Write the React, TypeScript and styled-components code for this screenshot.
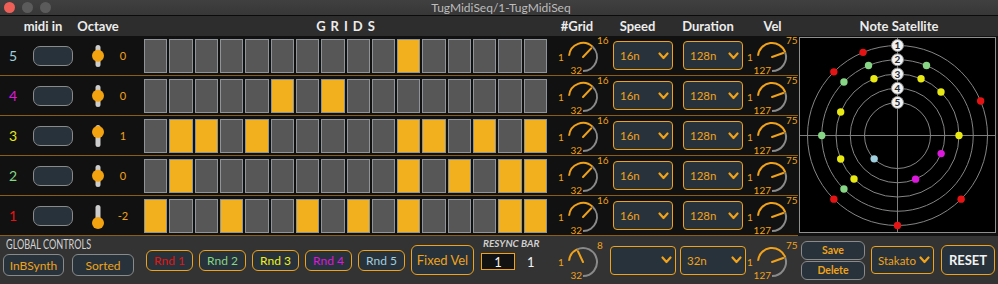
import React from 'react';
import styled, {createGlobalStyle} from 'styled-components';

const ORANGE = '#f0a21a';
const CELL_ON = '#f2b01f';
const SLATE = '#27323a';
const GREY_LINE = '#8a8a8a';

type Track = {n: number; color: string; oct: number; cells: number[]};

const tracks: Track[] = [
  {n: 5, color: '#9fcfdf', oct: 0, cells: [10]},
  {n: 4, color: '#dd18dd', oct: 0, cells: [5, 7]},
  {n: 3, color: '#e8e812', oct: 1, cells: [1, 2, 4, 10, 11, 13, 15]},
  {n: 2, color: '#86d686', oct: 0, cells: [1, 10, 12, 14, 15]},
  {n: 1, color: '#e51414', oct: -2, cells: [0, 3, 6, 8, 10, 14, 15]},
];

const GlobalStyle = createGlobalStyle`
  html, body {
    margin: 0;
    padding: 0;
    background: #111;
  }
  body {
    font-family: Lato, "Open Sans", sans-serif;
  }
  * {
    box-sizing: border-box;
  }
`;

const Window = styled.div`
  width: 998px;
  height: 284px;
  display: flex;
  flex-direction: column;
  background: #111;
  overflow: hidden;
`;

const TitleBar = styled.div`
  height: 16px;
  flex: none;
  display: grid;
  grid-template-columns: 1fr auto 1fr;
  align-items: center;
  background: linear-gradient(#404040, #373737);
  border-bottom: 1px solid #0b0b0b;
  padding-left: 4px;
`;

const Lights = styled.div`
  display: flex;
  gap: 7px;
`;

const Light = styled.span<{$color: string}>`
  width: 11px;
  height: 11px;
  border-radius: 50%;
  background: ${({$color}) => $color};
`;

const Title = styled.div`
  font-size: 12px;
  color: #bdbdbd;
  line-height: 15px;
`;

const Header = styled.div`
  height: 20px;
  flex: none;
  display: flex;
  align-items: center;
  background: #2d2d2d;
`;

const HeaderCell = styled.div<{$w: number; $ml?: number; $spacing?: number}>`
  width: ${({$w}) => $w}px;
  margin-left: ${({$ml = 0}) => $ml}px;
  text-align: center;
  font-size: 13px;
  font-weight: 700;
  color: #ececec;
  letter-spacing: ${({$spacing = 0}) => $spacing}px;
  padding-left: ${({$spacing = 0}) => $spacing}px;
  white-space: nowrap;
`;

const Main = styled.div`
  height: 200px;
  flex: none;
  display: flex;
`;

const Rows = styled.div`
  width: 798px;
  display: flex;
  flex-direction: column;
`;

const Row = styled.div`
  height: 40px;
  display: flex;
  align-items: center;
  border-bottom: 1px solid #8b5e14;
`;

const RowNum = styled.div<{$color: string}>`
  width: 26px;
  text-align: center;
  font-size: 14px;
  color: ${({$color}) => $color};
`;

const MidiBox = styled.div`
  width: 40px;
  height: 20px;
  margin-left: 7px;
  border-radius: 7px;
  background: ${SLATE};
  border: 1px solid ${GREY_LINE};
`;

const SliderSvg = styled.svg`
  margin-left: 13px;
  flex: none;
`;

const OctValue = styled.div`
  width: 26px;
  text-align: center;
  font-size: 11px;
  color: ${ORANGE};
`;

const Grid = styled.div`
  margin-left: 8px;
  width: 403px;
  height: 34px;
  display: grid;
  grid-template-columns: repeat(16, 1fr);
  gap: 2px;
`;

const Cell = styled.div<{$on: boolean}>`
  background: ${({$on}) => ($on ? CELL_ON : '#575757')};
  border: 1px solid #8d9598;
`;

const KnobSvg = styled.svg<{$ml: number}>`
  margin-left: ${({$ml}) => $ml}px;
  flex: none;
  overflow: visible;
`;

const Select = styled.div<{$w: number; $ml: number; $h?: number}>`
  width: ${({$w}) => $w}px;
  height: ${({$h = 29}) => $h}px;
  margin-left: ${({$ml}) => $ml}px;
  flex: none;
  display: flex;
  align-items: center;
  justify-content: space-between;
  padding: 0 3px 0 6px;
  border: 1px solid ${ORANGE};
  border-radius: 4px;
  background: ${SLATE};
  color: ${ORANGE};
  font-size: 11.5px;
`;

const SatelliteWrap = styled.div`
  width: 200px;
  padding: 1px 0 0 1px;
`;

const SatellitePanel = styled.div`
  width: 197px;
  height: 196px;
  background: #000;
  border: 1px solid #8f8f8f;
`;

const Footer = styled.div`
  height: 48px;
  flex: none;
  display: flex;
  align-items: center;
  background: #333;
`;

const GlobalGroup = styled.div`
  align-self: flex-start;
  width: 134px;
  flex: none;
  padding: 2px 0 0 3px;
  display: flex;
  flex-direction: column;
  gap: 4px;
`;

const GlobalLabel = styled.div`
  margin-left: 3px;
  font-size: 14px;
  line-height: 12px;
  color: #d4d4d4;
  white-space: nowrap;
  transform: scaleX(0.65);
  transform-origin: left center;
`;

const ButtonRow = styled.div<{$gap: number; $ml?: number}>`
  display: flex;
  gap: ${({$gap}) => $gap}px;
  margin-left: ${({$ml = 0}) => $ml}px;
`;

const Button = styled.div<{
  $w: number;
  $h: number;
  $border?: string;
  $color?: string;
  $size?: number;
  $bold?: boolean;
  $ml?: number;
}>`
  width: ${({$w}) => $w}px;
  height: ${({$h}) => $h}px;
  margin-left: ${({$ml = 0}) => $ml}px;
  flex: none;
  display: flex;
  align-items: center;
  justify-content: center;
  border-radius: 6px;
  border: 1px solid ${({$border = ORANGE}) => $border};
  background: ${SLATE};
  color: ${({$color = ORANGE}) => $color};
  font-size: ${({$size = 12}) => $size}px;
  font-weight: ${({$bold}) => ($bold ? 700 : 400)};
  white-space: nowrap;
`;

const ResyncGroup = styled.div`
  align-self: flex-start;
  width: 64px;
  flex: none;
  margin-left: 7px;
  padding-top: 2px;
  display: flex;
  flex-direction: column;
  gap: 5px;
`;

const ResyncLabel = styled.div`
  margin-left: 2px;
  font-size: 10px;
  line-height: 10px;
  font-style: italic;
  font-weight: 700;
  color: #cfcfcf;
  white-space: nowrap;
`;

const ResyncRow = styled.div`
  display: flex;
  align-items: center;
  gap: 12px;
`;

const ResyncBox = styled.div`
  width: 34px;
  height: 17px;
  border: 1px solid ${ORANGE};
  background: #121212;
  color: #f4f4f4;
  font-size: 13px;
  display: flex;
  align-items: center;
  justify-content: center;
`;

const ResyncValue = styled.span`
  color: #f4f4f4;
  font-size: 13px;
`;

const Stack = styled.div`
  margin-left: 3px;
  display: flex;
  flex-direction: column;
  gap: 1px;
`;

const pt = (cx: number, cy: number, r: number, a: number) => [
  cx + r * Math.cos((a * Math.PI) / 180),
  cy + r * Math.sin((a * Math.PI) / 180),
];

const arc = (cx: number, cy: number, r: number, a0: number, a1: number) => {
  const [x0, y0] = pt(cx, cy, r, a0);
  const [x1, y1] = pt(cx, cy, r, a1);
  const large = a1 - a0 > 180 ? 1 : 0;
  return `M${x0.toFixed(2)} ${y0.toFixed(2)} A${r} ${r} 0 ${large} 1 ${x1.toFixed(2)} ${y1.toFixed(2)}`;
};

const START = 185;
const END = 450;

function Knob({
  min,
  max,
  value,
  h,
  cy,
  ml,
}: {
  min: number;
  max: number;
  value: number;
  h: number;
  cy: number;
  ml: number;
}) {
  const cx = 26;
  const r = 14;
  const a = START + ((value - min) / (max - min)) * (END - START);
  const [nx, ny] = pt(cx, cy, r * 0.85, a);
  return (
    <KnobSvg $ml={ml} width={52} height={h} viewBox={`0 0 52 ${h}`}>
      <path d={arc(cx, cy, r, a, END)} stroke={GREY_LINE} strokeWidth={2} fill="none" />
      <path d={arc(cx, cy, r, START, a)} stroke={ORANGE} strokeWidth={2} fill="none" />
      <line x1={cx} y1={cy} x2={nx} y2={ny} stroke={ORANGE} strokeWidth={2} strokeLinecap="round" />
      <g fill={ORANGE} fontSize={10} fontFamily="Lato, sans-serif">
        <text x={cx - 22} y={cy + 3.5} textAnchor="middle">{min}</text>
        <text x={cx + 14} y={cy - 13}>{value}</text>
        <text x={cx - 1} y={cy + 16.5} textAnchor="end">{max}</text>
      </g>
    </KnobSvg>
  );
}

function Chevron() {
  return (
    <svg width={11} height={8} viewBox="0 0 11 8">
      <polyline points="1.5,1.5 5.5,6 9.5,1.5" fill="none" stroke={ORANGE} strokeWidth={2.2} strokeLinecap="round" strokeLinejoin="round" />
    </svg>
  );
}

function Dropdown({label, w, ml, h}: {label: string; w: number; ml: number; h?: number}) {
  return (
    <Select $w={w} $ml={ml} $h={h}>
      <span>{label}</span>
      <Chevron />
    </Select>
  );
}

function OctaveSlider({value}: {value: number}) {
  const ky = 19.7 - value * 3.6;
  return (
    <SliderSvg width={24} height={39} viewBox="0 0 24 39">
      <rect x={9.5} y={9} width={5} height={22} rx={2.5} fill="#cdcdcd" />
      <circle cx={12} cy={ky} r={6} fill="#f2a30f" />
    </SliderSvg>
  );
}

function Satellite() {
  const c = 97.5;
  const radius = (ring: number) => 90 - (ring - 1) * 14.25;
  return (
    <svg width={195} height={194} viewBox="0 0 195 194">
      <line x1={c} y1={0} x2={c} y2={194} stroke="#7d7d7d" strokeWidth={1} />
      <line x1={0} y1={c} x2={195} y2={c} stroke="#7d7d7d" strokeWidth={1} />
      {[1, 2, 3, 4, 5].map((ring) => (
        <circle key={ring} cx={c} cy={c} r={radius(ring)} fill="none" stroke="#858585" strokeWidth={1} />
      ))}
      {tracks.map((t) =>
        t.cells.map((i) => {
          const [x, y] = pt(c, c, radius(t.n), 270 + i * 22.5);
          return <circle key={`${t.n}-${i}`} cx={x} cy={y} r={3.7} fill={t.color} />;
        }),
      )}
      {[1, 2, 3, 4, 5].map((ring) => (
        <g key={ring}>
          <circle cx={c} cy={c - radius(ring)} r={6} fill="#f2f2f2" stroke="#8a8a8a" strokeWidth={1} />
          <text
            x={c}
            y={c - radius(ring) + 3.5}
            textAnchor="middle"
            fontSize={10}
            fontWeight={700}
            fontFamily="Lato, sans-serif"
            fill="#2a2a2a">
            {ring}
          </text>
        </g>
      ))}
    </svg>
  );
}

const rndColors = ['#e51414', '#86d686', '#f0f020', '#dd18dd', '#a4cddd'];

export default function App() {
  return (
    <>
      <GlobalStyle />
      <Window>
        <TitleBar>
          <Lights>
            <Light $color="#ed5f57" />
            <Light $color="#5b5b5b" />
            <Light $color="#5b5b5b" />
          </Lights>
          <Title>TugMidiSeq/1-TugMidiSeq</Title>
          <div />
        </TitleBar>

        <Header>
          <HeaderCell $w={66} $ml={10}>midi in</HeaderCell>
          <HeaderCell $w={44}>Octave</HeaderCell>
          <HeaderCell $w={403} $ml={24} $spacing={5}>GRIDS</HeaderCell>
          <HeaderCell $w={60}>#Grid</HeaderCell>
          <HeaderCell $w={55} $ml={3}>Speed</HeaderCell>
          <HeaderCell $w={56} $ml={15}>Duration</HeaderCell>
          <HeaderCell $w={55} $ml={9}>Vel</HeaderCell>
          <HeaderCell $w={198}>Note Satellite</HeaderCell>
        </Header>

        <Main>
          <Rows>
            {tracks.map((t) => (
              <Row key={t.n}>
                <RowNum $color={t.color}>{t.n}</RowNum>
                <MidiBox />
                <OctaveSlider value={t.oct} />
                <OctValue>{t.oct}</OctValue>
                <Grid>
                  {Array.from({length: 16}, (_, i) => (
                    <Cell key={i} $on={t.cells.includes(i)} />
                  ))}
                </Grid>
                <Knob min={1} max={32} value={16} h={39} cy={21} ml={10} />
                <Dropdown label="16n" w={60} ml={4} />
                <Dropdown label="128n" w={60} ml={10} />
                <Knob min={1} max={127} value={75} h={39} cy={21} ml={3} />
              </Row>
            ))}
          </Rows>
          <SatelliteWrap>
            <SatellitePanel>
              <Satellite />
            </SatellitePanel>
          </SatelliteWrap>
        </Main>

        <Footer>
          <GlobalGroup>
            <GlobalLabel>GLOBAL CONTROLS</GlobalLabel>
            <ButtonRow $gap={8}>
              <Button $w={61} $h={22} $border={GREY_LINE}>InBSynth</Button>
              <Button $w={62} $h={22} $border={GREY_LINE}>Sorted</Button>
            </ButtonRow>
          </GlobalGroup>
          <ButtonRow $gap={6} $ml={12}>
            {rndColors.map((col, i) => (
              <Button key={i} $w={47} $h={21} $color={col}>
                Rnd {i + 1}
              </Button>
            ))}
          </ButtonRow>
          <Button $w={63} $h={30} $ml={6} $size={13}>Fixed Vel</Button>
          <ResyncGroup>
            <ResyncLabel>RESYNC BAR</ResyncLabel>
            <ResyncRow>
              <ResyncBox>1</ResyncBox>
              <ResyncValue>1</ResyncValue>
            </ResyncRow>
          </ResyncGroup>
          <Knob min={1} max={32} value={8} h={48} cy={26} ml={12} />
          <Dropdown label="" w={66} ml={1} />
          <Dropdown label="32n" w={66} ml={4} />
          <Knob min={1} max={127} value={75} h={48} cy={26} ml={0} />
          <Stack>
            <Button $w={64} $h={19} $border={GREY_LINE} $size={10.5} $bold>Save</Button>
            <Button $w={64} $h={19} $border={GREY_LINE} $size={10.5} $bold>Delete</Button>
          </Stack>
          <Dropdown label="Stakato" w={63} ml={6} h={28} />
          <Button $w={54} $h={30} $ml={7} $size={13} $bold $color="#f2f2f2">RESET</Button>
        </Footer>
      </Window>
    </>
  );
}
